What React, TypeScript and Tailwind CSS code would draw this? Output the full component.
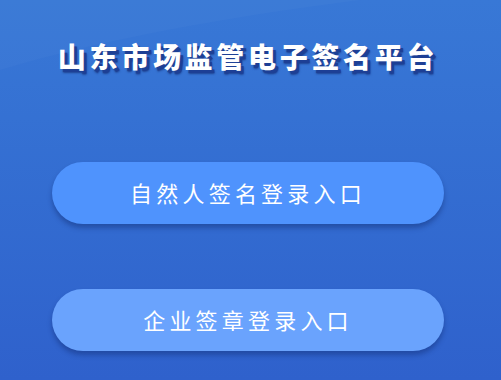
import React from 'react'

const cjk = { fontFamily: '"Noto Sans CJK SC", "Noto Sans", sans-serif' }

function EntryButton({ label, tone }: { label: string; tone: string }) {
  return (
    <button
      type="button"
      className={`w-[392px] h-[62px] rounded-full ${tone} text-white text-[22px] tracking-[4.2px] shadow-[0_4px_5px_rgba(10,30,90,0.35)] flex items-center justify-center pb-[2px]`}
      style={cjk}
    >
      {label}
    </button>
  )
}

export default function App() {
  return (
    <div className="relative w-[501px] h-[380px] overflow-hidden bg-gradient-to-b from-[#3878d6] to-[#2f61cc]">
      {/* faint background swoosh */}
      <svg className="absolute inset-0 pointer-events-none" width="501" height="380" viewBox="0 0 501 380">
        <path d="M0 70 C 100 40, 220 18, 360 0 L 0 0 Z" fill="#ffffff" fillOpacity="0.025" />
      </svg>
      <div className="relative w-[496px] flex flex-col items-center pt-[38px]">
        <h1
          className="text-[28px] leading-[36px] font-black text-white tracking-[3.7px] [text-shadow:3px_3px_0_#1d3f95,3px_4px_2px_rgba(15,35,100,0.6)]"
          style={cjk}
        >
          山东市场监管电子签名平台
        </h1>
        <div className="mt-[88px]">
          <EntryButton label="自然人签名登录入口" tone="bg-[#4f93fd]" />
        </div>
        <div className="mt-[65px]">
          <EntryButton label="企业签章登录入口" tone="bg-[#6aa3fd]" />
        </div>
      </div>
    </div>
  )
}
